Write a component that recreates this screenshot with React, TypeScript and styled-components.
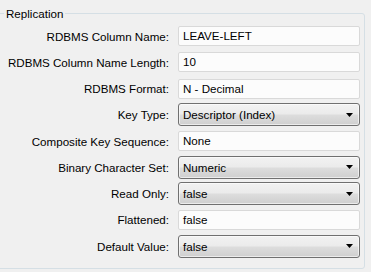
import React from "react";
import styled, { createGlobalStyle } from "styled-components";

const Global = createGlobalStyle`
  html, body {
    margin: 0;
    padding: 0;
    background: #f0f0f0;
    overflow: hidden;
  }
  body {
    font-family: "Liberation Sans", Arial, sans-serif;
    font-size: 11.6px;
    color: #000;
  }
`;

const Page = styled.div`
  width: 371px;
  height: 272px;
  padding-top: 7px;
  box-sizing: border-box;
`;

// Windows-style group box
const Group = styled.fieldset`
  margin: 0 0 0 -3px;
  width: 368px;
  height: 262px;
  box-sizing: border-box;
  border: 1px solid #d5dfe5;
  border-radius: 3px;
  padding: 3px 0 0 0;
`;

const Legend = styled.legend`
  padding: 0 2px;
  margin-left: 6px;
  line-height: 13px;
`;

const Form = styled.div`
  display: grid;
  grid-template-columns: 171px 182px;
  grid-auto-rows: 26.25px;
  column-gap: 9px;
  align-items: center;
`;

const Label = styled.div`
  text-align: right;
  white-space: nowrap;
`;

const TextBox = styled.div`
  height: 20px;
  box-sizing: border-box;
  border: 1px solid #d9d9d9;
  border-radius: 2px;
  background: #fcfcfc;
  padding: 0 0 0 4px;
  line-height: 18px;
`;

const Select = styled.div`
  height: 23px;
  box-sizing: border-box;
  border: 1px solid #707070;
  border-radius: 3px;
  background: linear-gradient(#f2f2f2 0%, #ebebeb 48%, #dddddd 52%, #cfcfcf 100%);
  box-shadow: inset 0 0 0 1px rgba(255, 255, 255, 0.6);
  padding: 0 6px 0 4px;
  display: flex;
  align-items: center;
  justify-content: space-between;
`;

const Arrow = () => (
  <svg width="7" height="4" viewBox="0 0 7 4">
    <path d="M0 0h7L3.5 4z" fill="#000" />
  </svg>
);

type Field = { label: string; value: string; select?: boolean };

const fields: Field[] = [
  { label: "RDBMS Column Name:", value: "LEAVE-LEFT" },
  { label: "RDBMS Column Name Length:", value: "10" },
  { label: "RDBMS Format:", value: "N - Decimal" },
  { label: "Key Type:", value: "Descriptor (Index)", select: true },
  { label: "Composite Key Sequence:", value: "None" },
  { label: "Binary Character Set:", value: "Numeric", select: true },
  { label: "Read Only:", value: "false", select: true },
  { label: "Flattened:", value: "false" },
  { label: "Default Value:", value: "false", select: true },
];

export default function App() {
  return (
    <Page>
      <Global />
      <Group>
        <Legend>Replication</Legend>
        <Form>
          {fields.map((f) => (
            <React.Fragment key={f.label}>
              <Label>{f.label}</Label>
              {f.select ? (
                <Select>
                  <span>{f.value}</span>
                  <Arrow />
                </Select>
              ) : (
                <TextBox>{f.value}</TextBox>
              )}
            </React.Fragment>
          ))}
        </Form>
      </Group>
    </Page>
  );
}
